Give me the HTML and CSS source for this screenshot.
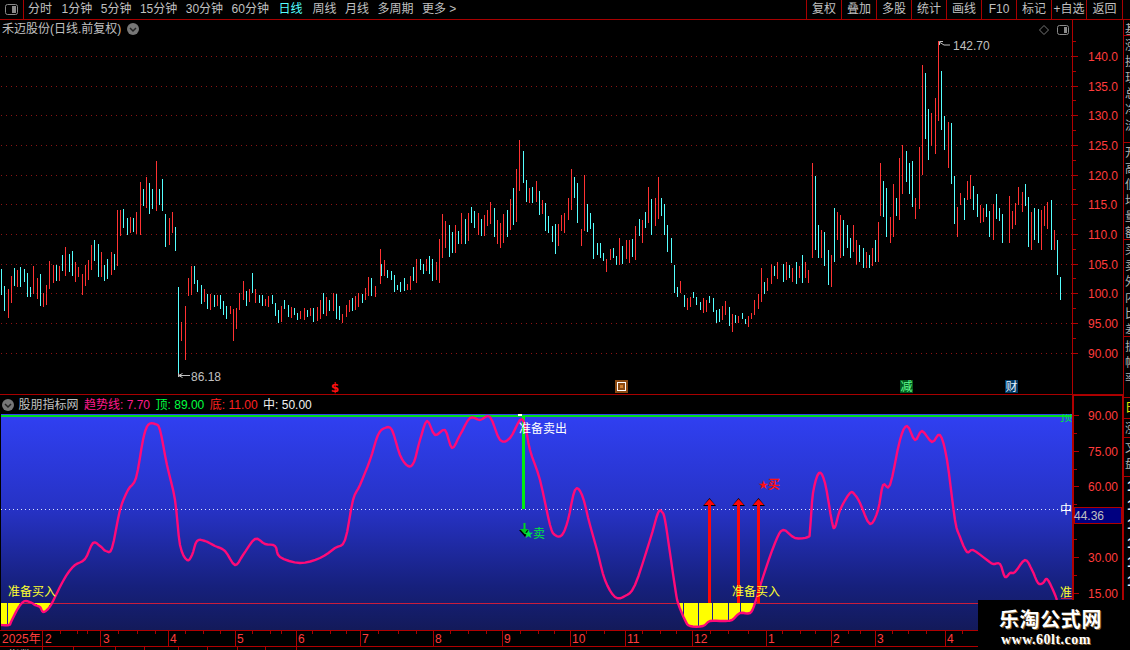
FILE: index.html
```html
<!DOCTYPE html>
<html lang="zh-CN">
<head>
<meta charset="utf-8">
<title>禾迈股份</title>
<link rel="stylesheet" href="styles.css">
</head>
<body>
<div class="app">
  <header class="toolbar">
    <div class="toggle">
      <svg class="toggle-icon" width="13" height="11" viewBox="0 0 13 11"><rect x="0.5" y="0.5" width="12" height="10" rx="2" class="ic-line"/><rect x="7" y="2" width="4" height="7" class="ic-fill"/></svg>
    </div>
    <nav class="periods">
      <span>分时</span><span class="first-min">1分钟</span><span>5分钟</span><span>15分钟</span><span>30分钟</span><span>60分钟</span><span class="active">日线</span><span>周线</span><span>月线</span><span>多周期</span><span>更多 &gt;</span>
    </nav>
    <div class="actions">
      <span>复权</span><span>叠加</span><span>多股</span><span>统计</span><span>画线</span><span>F10</span><span>标记</span><span>+自选</span><span class="last">返回</span>
    </div>
  </header>

  <div class="workspace">
    <div class="panes">
      <section class="price-pane">
        <svg class="price-chart" width="1072" height="374" viewBox="0 20 1072 374">
          <g id="grid" class="grid">
            <path d="M1 56.5H1072M1 86.5H1072M1 115.5H1072M1 145.5H1072M1 175.5H1072M1 204.5H1072M1 234.5H1072M1 264.5H1072M1 293.5H1072M1 323.5H1072M1 353.5H1072"/>
          </g>
          <path id="candles-up" class="candle-up" d=""/>
          <path id="candles-down" class="candle-down" d=""/>

          <text x="2" y="33" class="t-title">禾迈股份(日线.前复权)</text>
          <circle cx="133" cy="29" r="6" class="chev-bg"/>
          <path d="M130 28l3 3 3-3" class="chev"/>
          <path d="M1044 25.5l4.5 4.5-4.5 4.5-4.5-4.5z" class="diamond"/>
          <rect x="1057.5" y="25.5" width="11" height="9" rx="2" class="ic-line"/>
          <rect x="1064" y="27" width="3" height="6" class="ic-fill"/>

          <path d="M939.5 45V41.5H943M940 42.5l4 2.5h6" class="leader"/>
          <text x="953" y="50" class="t-price">142.70</text>
          <path d="M178.5 373v4M178.5 375.5H190M178.5 375.5l4-2M178.5 375.5l4 2" class="leader"/>
          <text x="191" y="381" class="t-price">86.18</text>

          <text x="335" y="392" class="t-dollar" text-anchor="middle">$</text>
          <rect x="615" y="380" width="13" height="13" class="mk-hui"/>
          <rect x="617.5" y="382.5" width="8" height="8" class="mk-hui-ring"/>
          <rect x="620" y="385" width="3" height="3" class="mk-hui-core"/>
          <rect x="900" y="380" width="13" height="13" class="mk-jian"/>
          <text x="900.500" y="391" class="t-mark t-mark-jian">减</text>
          <rect x="1005" y="380" width="13" height="13" class="mk-cai"/>
          <text x="1005.5" y="391" class="t-mark t-mark-cai">财</text>
        </svg>
        <svg class="axis" width="51" height="374" viewBox="1072 20 51 374">
          <path d="M1072.500 20V394" class="frame"/>
          <path d="M1073 56.500h5M1073 86.500h5M1073 115.500h5M1073 145.500h5M1073 175.500h5M1073 204.500h5M1073 234.500h5M1073 264.500h5M1073 293.500h5M1073 323.500h5M1073 353.500h5" class="tick"/>
          <path d="M1073 41.500h3M1073 71.500h3M1073 100.500h3M1073 130.500h3M1073 160.500h3M1073 189.500h3M1073 219.500h3M1073 249.500h3M1073 278.500h3M1073 308.500h3M1073 338.500h3" class="tick"/>
          <text x="1088" y="61" class="t-axis">140.0</text>
          <text x="1088" y="91" class="t-axis">135.0</text>
          <text x="1088" y="120" class="t-axis">130.0</text>
          <text x="1088" y="150" class="t-axis">125.0</text>
          <text x="1088" y="180" class="t-axis">120.0</text>
          <text x="1088" y="209" class="t-axis">115.0</text>
          <text x="1088" y="239" class="t-axis">110.0</text>
          <text x="1088" y="269" class="t-axis">105.0</text>
          <text x="1088" y="298" class="t-axis">100.0</text>
          <text x="1088" y="328" class="t-axis">95.00</text>
          <text x="1088" y="358" class="t-axis">90.00</text>
        </svg>
      </section>

      <section class="sub-pane">
        <div class="sub-main">
          <div class="legend">
            <svg class="legend-chev" width="12" height="12" viewBox="0 0 12 12"><circle cx="6" cy="6" r="6" class="chev-bg"/><path d="M3 5l3 3 3-3" class="chev"/></svg>
            <span class="lg-name">股朋指标网</span>
            <span class="lg-pink">趋势线: 7.70</span>
            <span class="lg-green">顶: 89.00</span>
            <span class="lg-red">底: 11.00</span>
            <span class="lg-white">中: 50.00</span>
          </div>
          <svg class="sub-chart" width="1072" height="216" viewBox="0 414 1072 216">
            <defs>
              <linearGradient id="bluefade" x1="0" y1="0" x2="0" y2="1">
                <stop offset="0" stop-color="#3040f2"/>
                <stop offset="0.45" stop-color="#2632c4"/>
                <stop offset="0.8" stop-color="#16207c"/>
                <stop offset="1" stop-color="#131a5a"/>
              </linearGradient>
            </defs>
            <rect x="1" y="414" width="1071" height="216" fill="url(#bluefade)"/>
            <rect x="1" y="415" width="1071" height="2" class="top-line"/>
            <rect x="518" y="414" width="4" height="2" class="white-fill"/>
            <path d="M1 509.500H1072" class="mid-line"/>
            <path d="M1 603.500H1072" class="low-line"/>

            <polygon points="1,603 1,625 9,625 11,622 17,610 20,603" class="yellow"/>
            <polygon points="32,603 35,606 37,603" class="yellow"/>
            <polygon points="36,603 43,612 48,608 51,603" class="yellow"/>
            <polygon points="678,603 680,610 685,620 690,626 703,626 710,621 723,621 732,620 740,613 750,613 755,603" class="yellow"/>
            <path d="M7.500 603V625M683.500 603V619M698.500 603V626M712.500 603V621M728.500 603V620M740.500 603V613" class="yellow-gap"/>

            <rect x="522" y="416" width="3" height="93" class="green-bar"/>
            <path d="M524.500 523V532" class="green-stem"/>
            <polygon points="519,530 529,530 525,537" class="shadow"/>
            <polygon points="520,529 528,529 524.500,534" class="green-fill"/>
            <text x="523" y="538" class="t-star t-green">★</text>
            <text x="533" y="538" class="t-sub t-green">卖</text>

            <polyline id="trend" class="trend" points="1,625 9,625 11,622 17,610 22,603 26,601 32,603 35,605 40,607 43,612 48,609 52,603 57,593 62,583 68,573 75,565 85,559 93,543 100,546 106,551 112,548 120,510 128,490 136,478 143,440 148,425 155,424 160,430 167,465 175,500 180,545 187,560 192,555 197,541 205,541 215,546 225,551 235,565 243,555 255,539 265,544 275,546 280,557 300,563 320,558 335,548 345,540 353,500 360,485 370,460 378,435 385,428 392,430 400,455 408,466 414,462 420,440 427,421 435,435 445,430 452,448 460,435 470,418 480,420 490,417 500,440 510,438 520,420 525,425 530,450 540,480 550,525 555,535 562,535 568,520 575,490 582,495 590,525 597,550 605,580 615,597 625,596 635,585 650,540 658,513 662,512 665,520 670,553 675,587 678,603 685,620 690,626 703,626 710,621 723,621 732,620 740,613 750,613 755,603 763,577 775,543 783,530 795,538 808,537 810,530 813,493 819,473 825,483 832,522 835,527 840,510 850,493 855,495 860,503 870,524 878,510 883,485 890,485 900,440 907,426 915,440 922,431 932,442 940,435 947,460 955,520 960,537 967,552 973,550 987,560 993,564 1000,564 1005,577 1010,573 1015,572 1025,560 1032,570 1038,583 1043,583 1047,579 1053,590 1057,600"/>

            <g class="arrow">
              <polygon points="703,506 709.500,498 716,506" class="shadow"/>
              <polygon points="704,505 709.500,499 715,505" class="red-fill"/>
              <rect x="708" y="505" width="3" height="98" class="red-fill"/>
              <polygon points="732,506 738.500,498 745,506" class="shadow"/>
              <polygon points="733,505 738.500,499 744,505" class="red-fill"/>
              <rect x="737" y="505" width="3" height="98" class="red-fill"/>
              <polygon points="752,506 758.500,498 765,506" class="shadow"/>
              <polygon points="753,505 758.500,499 764,505" class="red-fill"/>
              <rect x="757" y="505" width="3" height="98" class="red-fill"/>
            </g>
            <text x="758" y="489" class="t-star t-red">★</text>
            <text x="768" y="489" class="t-sub t-red">买</text>

            <text x="8" y="596" class="t-sub t-yellow">准备买入</text>
            <text x="732" y="596" class="t-sub t-yellow">准备买入</text>
            <text x="519" y="433" class="t-sub t-white">准备卖出</text>
            <text x="1060" y="597" class="t-sub t-yellow">准</text>
            <text x="1060" y="514" class="t-sub t-white">中</text>
            <text x="1060" y="421" class="t-sub t-green">顶</text>
            <path d="M1061 598.500H1072" class="low-line"/>
          </svg>
        </div>
        <svg class="sub-axis" width="51" height="235" viewBox="1072 395 51 235">
          <path d="M1072.500 395V630M1073.500 395V630M1072 395.500H1123M1122.500 395V630" class="frame"/>
          <path d="M1074 415.500h5M1074 451.500h5M1074 486.500h5M1074 557.500h5M1074 593.500h5" class="tick"/>
          <path d="M1074 433.500h3M1074 469.500h3M1074 504.500h3M1074 539.500h3M1074 575.500h3M1074 611.500h3" class="tick"/>
          <text x="1088" y="420" class="t-axis">90.00</text>
          <text x="1088" y="456" class="t-axis">75.00</text>
          <text x="1088" y="491" class="t-axis">60.00</text>
          <text x="1088" y="562" class="t-axis">30.00</text>
          <text x="1088" y="598" class="t-axis">15.00</text>
          <rect x="1074.500" y="507.500" width="47" height="16" class="cursor-box"/>
          <text x="1074" y="520" class="t-cursor">44.36</text>
        </svg>
      </section>

      <svg class="time-axis" width="1123" height="20" viewBox="0 630 1123 20">
        <path d="M0 630.500H1123M0 646.500H1123" class="frame"/>
        <path d="M42.500 631V646M100.500 631V646M168.500 631V646M235.500 631V646M296.500 631V646M360.500 631V646M433.500 631V646M502.500 631V646M570.500 631V646M625.500 631V646M692.500 631V646M766.500 631V646M831.500 631V646M875.500 631V646M945.500 631V646M1072.500 631V646" class="frame"/>
        <path d="M42.500 647V650M73.500 647V650M115.500 647V650M144.500 647V650M178.500 647V650M207.500 647V650M237.500 647V650M265.500 647V650M296.500 647V650" class="frame"/>
        <path d="M60 631v3M77 631v3M87 631v3M118 631v3M137 631v3M155 631v3M185 631v3M203 631v3M220 631v3M252 631v3M270 631v3M281 631v3M312 631v3M330 631v3M346 631v3M378 631v3M398 631v3M416 631v3M450 631v3M468 631v3M486 631v3M520 631v3M538 631v3M554 631v3M586 631v3M604 631v3M642 631v3M660 631v3M676 631v3M710 631v3M728 631v3M748 631v3M782 631v3M800 631v3M815 631v3M848 631v3M860 631v3M892 631v3M908 631v3M926 631v3M962 631v3" class="tick-lite"/>
        <text x="2" y="643" class="t-axis">2025年</text>
        <text x="45" y="643" class="t-axis">2</text>
        <text x="103" y="643" class="t-axis">3</text>
        <text x="170" y="643" class="t-axis">4</text>
        <text x="237" y="643" class="t-axis">5</text>
        <text x="298" y="643" class="t-axis">6</text>
        <text x="362" y="643" class="t-axis">7</text>
        <text x="435" y="643" class="t-axis">8</text>
        <text x="504" y="643" class="t-axis">9</text>
        <text x="572" y="643" class="t-axis">10</text>
        <text x="627" y="643" class="t-axis">11</text>
        <text x="694" y="643" class="t-axis">12</text>
        <text x="768" y="643" class="t-axis">1</text>
        <text x="833" y="643" class="t-axis">2</text>
        <text x="877" y="643" class="t-axis">3</text>
        <text x="947" y="643" class="t-axis">4</text>
        <text x="8" y="660" class="t-status">指数</text>
      </svg>
    </div>

    <aside class="sidebar">
      <div class="sb-sec sb-a"><p class="sb-text">基</p></div>
      <div class="sb-sec sb-b"><p class="sb-text">涨换现总净流</p></div>
      <div class="sb-sec sb-c"><p class="sb-text">开高低均量额</p></div>
      <div class="sb-sec sb-d"><p class="sb-text">买卖外内比差</p></div>
      <div class="sb-sec sb-e"><p class="sb-text">振幅率</p></div>
      <div class="sb-sec sb-f"><p class="sb-text sb-yellow">日</p></div>
      <div class="sb-sec sb-g"><p class="sb-text">涨</p></div>
      <div class="sb-sec sb-h"><p class="sb-text">文盘</p></div>
      <div class="sb-rows"><span>1</span><span>1</span><span>1</span><span>1</span><span>1</span><span>1</span></div>
    </aside>
  </div>

  <div class="watermark">
    <strong class="wm-cn">乐淘公式网</strong>
    <strong class="wm-url">www.60lt.com</strong>
  </div>
</div>
<script src="chart.js"></script>
</body>
</html>
```

FILE: styles.css
```css
* { box-sizing: border-box; margin: 0; padding: 0; }

html, body { width: 1130px; height: 650px; overflow: hidden; background: #000; }

body { font: 12px/1 "Liberation Sans", "Noto Sans CJK SC", sans-serif; color: #c0c0c0; }

svg { display: block; }

svg text { font-family: "Liberation Sans", "Noto Sans CJK SC", sans-serif; font-size: 12px; }

.app { position: relative; width: 1130px; height: 650px; display: flex; flex-direction: column; background: #000; overflow: hidden; }

/* toolbar */
.toolbar { flex: 0 0 20px; display: flex; align-items: stretch; border-bottom: 1px solid #a80000; line-height: 19px; padding-right: 7px; }
.toggle { width: 24px; border-right: 1px solid #a80000; display: flex; align-items: center; justify-content: center; }
.periods { display: flex; gap: 8.500px; padding-left: 4px; flex: 1; }
.periods .first-min { margin-left: 1px; }
.periods .active { color: #55ffff; margin: 0 1.500px 0 1px; }
.actions { display: flex; }
.actions span { width: 35px; border-left: 1px solid #a80000; text-align: center; }
.actions .last { width: 37px; border-right: 1px solid #a80000; }

.ic-line { fill: none; stroke: #8a8a8a; }
.ic-fill { fill: #8a8a8a; }

/* layout */
.workspace { flex: 1; display: flex; min-height: 0; }
.panes { width: 1123px; display: flex; flex-direction: column; }
.price-pane { flex: 0 0 375px; display: flex; border-bottom: 1px solid #a80000; }
.sub-pane { flex: 0 0 235px; display: flex; }
.sub-main { width: 1072px; display: flex; flex-direction: column; }
.sub-chart { flex: 0 0 216px; }
.time-axis { flex: 0 0 20px; }

/* legend */
.legend { flex: 0 0 19px; display: flex; align-items: center; gap: 5.500px; padding-left: 2px; color: #c0c0c0; }
.lg-name { margin-left: -1px; }
.lg-pink { color: #ff1a8c; }
.lg-green { color: #00ff40; }
.lg-red { color: #ff2020; }
.lg-white { color: #f0f0f0; }

/* chart primitives */
.grid path { stroke: #8c1414; stroke-dasharray: 1 4; fill: none; }
.candle-up { stroke: #ff3232; fill: none; shape-rendering: crispEdges; }
.candle-down { stroke: #55ffff; fill: none; shape-rendering: crispEdges; }
.chev-bg { fill: #777; }
.chev { fill: none; stroke: #222; stroke-width: 1.500; }
.diamond { fill: none; stroke: #777; }
.leader { fill: none; stroke: #c0c0c0; }
.tick { stroke: #b00000; fill: none; shape-rendering: crispEdges; }
.tick-lite { stroke: #a80000; fill: none; shape-rendering: crispEdges; }
.frame { stroke: #b00000; fill: none; shape-rendering: crispEdges; }

.t-title { fill: #c0c0c0; }
.t-price { fill: #c0c0c0; }
.t-dollar { fill: #ff1010; font-weight: 700; font-family: "DejaVu Sans", sans-serif; }
.t-axis { fill: #ff3c3c; }
.t-cursor { fill: #c0c0c0; }
.t-status { fill: #c0c0c0; }
.t-mark { font-size: 12px; }
.t-mark-jian { fill: #60ff90; }
.t-mark-cai { fill: #e0f0ff; }
.t-sub { font-size: 12px; }
svg text.t-star { font-family: "DejaVu Sans", sans-serif; font-size: 12px; }
.t-yellow { fill: #ffff30; }
.t-white { fill: #fff; }
.t-green { fill: #00e83a; }
.t-red { fill: #ff1010; font-weight: 700; }

.mk-hui { fill: #8a4a12; }
.mk-hui-ring { fill: #8a4a12; stroke: #fff; }
.mk-hui-core { fill: #d08030; }
.mk-jian { fill: #00591e; }
.mk-cai { fill: #003a66; }

.top-line { fill: #00e020; }
.white-fill { fill: #fff; }
.mid-line { stroke: #dfe6ff; stroke-dasharray: 1 3; fill: none; shape-rendering: crispEdges; }
.low-line { stroke: #c81e3c; fill: none; shape-rendering: crispEdges; }
.yellow { fill: #ffff00; shape-rendering: crispEdges; }
.yellow-gap { stroke: #1a2290; fill: none; shape-rendering: crispEdges; }
.green-bar { fill: #00ee10; }
.green-stem { stroke: #00d820; stroke-width: 2; fill: none; }
.green-fill { fill: #00c820; }
.red-fill { fill: #ff0808; }
.shadow { fill: #000; }
.trend { fill: none; stroke: #ff0a78; stroke-width: 2.400; stroke-linejoin: round; }
.cursor-box { fill: #000080; stroke: #b00000; }

/* sidebar */
.sidebar { width: 7px; border-left: 1px solid #a80000; display: flex; flex-direction: column; overflow: hidden; }
.sb-sec { overflow: hidden; border-bottom: 1px solid #a80000; padding: 2px 0 0 1px; flex: none; }
.sb-a { height: 16px; }
.sb-b { height: 107px; }
.sb-c { height: 97px; }
.sb-d { height: 97px; }
.sb-e { height: 61px; }
.sb-f { height: 21px; }
.sb-g { height: 19px; }
.sb-h { height: 39px; }
.sb-text { width: 12px; word-break: break-all; line-height: 16px; color: #b0b0b0; }
.sb-yellow { color: #e8e800; }
.sb-rows { display: flex; flex-direction: column; padding-left: 3px; color: #f0f0f0; font-weight: 700; font-size: 14px; line-height: 19px; }

/* watermark */
.watermark { position: absolute; right: 0; bottom: 0; width: 152px; height: 50px; background: #000; display: flex; flex-direction: column; align-items: flex-start; padding: 9px 0 0 21px; gap: 4px; color: #fff; }
.wm-cn { font: 700 20px/20px "Noto Sans CJK SC", sans-serif; letter-spacing: 0.600px; text-shadow: 1px 1px 0 #7a5a30; }
.wm-url { margin-left: 2px; font: 700 14px/14px "Liberation Serif", serif; letter-spacing: 0.500px; text-shadow: 1px 1px 0 #7a5a30; }
```

FILE: chart.js
```js
// Daily bars read off the chart: x, high-y, low-y, colour (r = up, c = down).
var blocks = [
  { x0: 0, y0: 140, bars: "4 387 465 c 13 438 513 c 25 447 534 r 34 408 489 r 43 384 438 c 52 390 441 r 61 381 441 c 73 387 426 c 82 399 471 c 91 441 471 c 100 378 462 r 112 414 477 r 121 402 498 c 130 459 501 r 139 435 495 r 148 363 447 r 160 375 429 r 169 375 423 c 178 378 423 r 187 345 393 c 196 321 408 r 208 342 396 c 217 333 408 c 226 366 426 r 235 381 411 r 247 402 465 r 256 375 438 r 265 360 420 r 274 315 390 r 283 300 363 c 295 312 411 c 304 336 411 r 313 375 423 c 322 357 417 c 334 336 405 r 343 342 390 c 352 210 378 r 361 210 288 r 370 207 264 c 382 234 285 c 391 231 280 r 400 234 276 c 409 216 282 r 421 126 285 r 430 147 198 c 439 111 204 r 448 129 222 c 457 147 207 c 469 63 213 r 478 147 195 c 487 117 213 c 496 222 321 c 508 234 315 r 517 216 279 r 526 261 333 c 535 441 705 c 544 546 603 r 556 498 660 r 565 414 468 r 574 378 465 r 583 378 432 c 592 420 456 c 604 435 492 c 613 447 486 r 622 462 507 c 631 462 510 r 643 465 501 c 652 465 498 r 661 465 507 c 670 483 525 c 679 498 537 c 691 498 522 r 700 507 603 r 709 504 567 r 718 459 510 r 730 423 480 r 739 453 498 c 748 447 486 r 757 399 459 c 766 447 489 r 778 465 489 c 787 465 498 c 796 477 498 r 805 468 501 r 817 465 492 c 826 489 528 c 835 510 549 c 844 498 546 r 853 480 507 c 865 495 531 c 874 501 534 r 883 504 525 c 892 519 540 c 901 513 537 r 913 504 540 r 922 510 531 c 931 504 528 r 940 504 546 c 952 501 543 r 961 480 537 r 970 459 522 c 979 471 528 r 988 480 513 c 1000 459 513 r 1009 462 537 c 1018 498 540 c 1027 522 549 r 1039 495 531 r 1048 480 516 r 1057 474 513 c 1066 468 510 r 1075 459 501 r 1087 462 489 c 1096 444 480 r 1105 411 468 r 1114 414 468 c 1126 438 471 r" },
  { x0: 378, y0: 130, bars: "6 357 462 r" },
  { x0: 380, y0: 130, bars: "4 402 438 c 13 390 438 r 22 420 444 c 34 423 450 c 43 435 486 c 52 465 480 c 61 456 486 c 73 444 483 c 82 462 480 r 91 438 480 r 100 411 453 c 109 387 459 r 121 387 420 c 130 402 432 c 139 387 423 r 148 378 432 c 157 387 453 c 169 396 450 r 178 327 459 r 187 252 384 r 196 273 354 r 208 285 381 c 217 306 369 c 226 285 369 r 235 303 342 c 244 249 342 r 256 267 342 c 265 249 333 r 274 231 279 c 283 243 294 c 295 249 315 r 304 267 318 c 313 255 318 r 322 240 288 r 331 216 282 r 343 234 321 c 352 270 342 r 361 279 354 r 370 252 339 r 382 240 321 c 391 207 300 r 400 174 285 c 409 117 276 r 418 30 183 r 430 63 159 c 439 150 216 c 448 174 219 r 457 171 219 c 469 153 216 r 478 183 255 c 487 210 252 r 496 219 303 c 505 258 309 c 517 288 336 c 526 282 372 c 535 282 348 r 544 255 303 r 553 249 309 r 565 204 270 r 574 117 240 r 583 141 204 c 592 159 279 c 604 297 348 r 613 135 303 r 622 222 306 c 631 249 297 c 640 279 387 c 652 339 375 c 661 339 384 c 670 369 393 c 679 387 426 r 691 357 390 r 700 354 384 c 709 378 405 c 718 324 405 r 727 348 402 c 739 330 387 r 748 330 399 r 757 327 381 c 766 288 390 r 778 267 318 c 787 270 339 r 796 246 294 c 805 171 279 r 814 207 315 c 826 204 288 r 835 141 267 r 844 204 258 c 853 222 315 c 862 285 366 c 874 324 399 c 883 405 489 c 892 471 501 c 901 453 489 r 913 495 531 c 922 504 540 r 931 501 531 r 940 486 504 c 949 501 525 c 961 516 540 c 970 504 549 r 979 510 546 r 988 498 519 c 1000 504 546 c 1009 540 579 c 1018 537 576 c 1027 528 570 r 1036 513 555 r 1048 531 588 c 1057 552 606 r 1066 555 579 c 1075 558 579 r 1087 549 567 c 1096 567 582 c 1105 558 591 r 1114 549 567 r 1123 510 555 r 1135 492 537 r 1144 414 516 r 1153 456 492 c 1162 444 483 r 1174 402 462 r 1183 408 438 c 1192 396 447 r" },
  { x0: 780, y0: 0, bars: "9 792 846 c 18 786 840 r 27 795 834 c 36 804 846 r 48 786 852 c 57 798 834 r 66 765 849 c 75 786 834 r 84 810 849 r 96 489 774 r 105 528 750 c 114 675 774 c 123 690 774 r 132 696 798 c 144 750 855 c 153 765 861 r 162 624 786 c 171 636 720 r 180 645 774 r 189 660 768 c 201 675 744 c 210 714 774 c 219 675 756 r 228 720 795 r 237 735 786 c 249 744 804 c 258 756 804 r 267 765 804 c 276 744 798 r 285 720 786 c 294 666 786 r" },
  { x0: 880, y0: 30, bars: "1 399 558 r 10 453 561 c 19 474 620 c 31 560 640 r 40 462 620 r 49 504 558 c 58 384 570 r 67 345 492 r 79 363 456 c 88 399 492 c 97 393 531 c 106 504 567 r 118 351 537 r 127 105 435 r 136 129 327 c 145 237 390 c 154 249 348 r 166 204 372 r 175 33 273 r 184 123 300 c 193 258 360 c 205 276 414 r 214 279 462 c 223 438 582 c 232 531 620 r 241 489 525 r 253 504 570 c 262 453 510 r 271 435 507 r 280 468 540 c 292 492 561 c 301 525 579 r 310 534 576 r 319 522 561 c 328 543 620 c 340 522 630 r 349 492 567 c 358 534 573 c 367 552 640 c 388 498 640 r 397 543 597 r 406 519 585 r 415 471 525 r 427 486 546 r 436 462 528 c 445 501 650 c 454 546 660 r 463 534 630 c 475 537 640 c 484 540 660 r 493 528 588 r 502 516 597 r 514 510 660 c 523 600 660 r 532 630 735 c 541 740 810 c" }
];

var up = "", down = "";
blocks.forEach(function (block) {
  var t = block.bars.trim().split(/\s+/);
  for (var i = 0; i + 3 < t.length; i += 4) {
    var x = Math.floor(block.x0 + t[i] / 3) + 0.5;
    var top = Math.round(block.y0 + t[i + 1] / 3);
    var bottom = Math.round(block.y0 + t[i + 2] / 3);
    var seg = "M" + x + " " + top + "V" + bottom;
    if (t[i + 3] === "r") { up += seg; } else { down += seg; }
  }
});
document.getElementById("candles-up").setAttribute("d", up);
document.getElementById("candles-down").setAttribute("d", down);

// Smooth the indicator line through its sampled points (Catmull-Rom).
var trend = document.getElementById("trend");
var pts = trend.getAttribute("points").trim().split(/\s+/).map(function (p) {
  return p.split(",").map(Number);
});
var smooth = [];
for (var n = 0; n < pts.length - 1; n++) {
  var a = pts[Math.max(n - 1, 0)], b = pts[n], c = pts[n + 1], d = pts[Math.min(n + 2, pts.length - 1)];
  for (var s = 0; s < 4; s++) {
    var u = s / 4, u2 = u * u, u3 = u2 * u;
    var px = 0.5 * (2 * b[0] + (c[0] - a[0]) * u + (2 * a[0] - 5 * b[0] + 4 * c[0] - d[0]) * u2 + (3 * b[0] - a[0] - 3 * c[0] + d[0]) * u3);
    var py = 0.5 * (2 * b[1] + (c[1] - a[1]) * u + (2 * a[1] - 5 * b[1] + 4 * c[1] - d[1]) * u2 + (3 * b[1] - a[1] - 3 * c[1] + d[1]) * u3);
    smooth.push(px.toFixed(1) + "," + py.toFixed(1));
  }
}
smooth.push(pts[pts.length - 1].join(","));
trend.setAttribute("points", smooth.join(" "));
```
